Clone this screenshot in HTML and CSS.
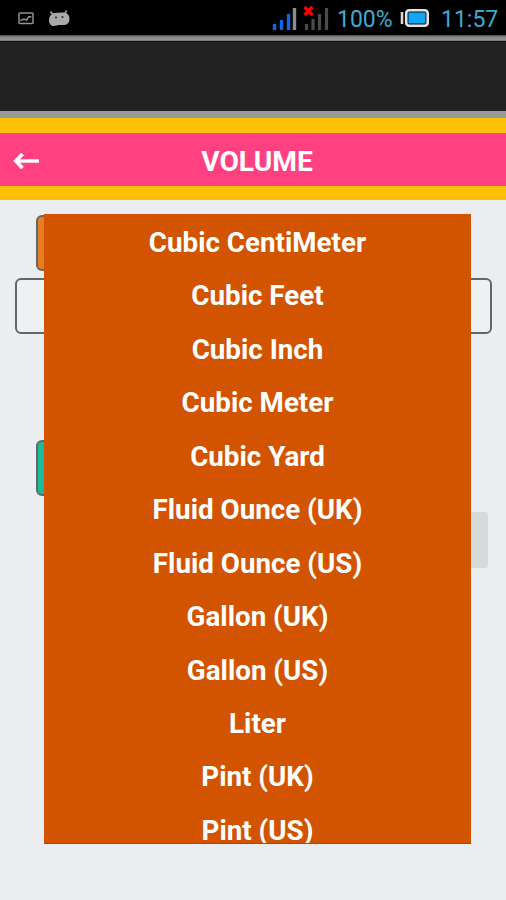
FILE: index.html
```html
<!DOCTYPE html>
<html lang="en">
<head>
<meta charset="utf-8">
<title>Volume</title>
<link rel="stylesheet" href="styles.css">
</head>
<body>
<header class="status">
  <svg class="notices" width="76" height="35" viewBox="0 0 76 35">
    <rect x="19" y="13" width="14" height="10.500" rx="1" fill="none" stroke="#929292" stroke-width="1.5"/>
    <path d="M20.500 20.500l3.500-1.500 2.500 1 2.500-3.500 2.500.5" fill="none" stroke="#929292" stroke-width="1.500"/>
    <path d="M50.500 11.500l3 4M66.500 10.500l-2 4" stroke="#aaa" stroke-width="1.600"/>
    <path d="M49 20.500c0-4 2-7 6-7.500 3-.4 5-.3 8-.5 4-.2 6.500 2.500 6.500 6.500S67 25 63 25h-4c-2 0-3 1-5 1-3 0-5-2-5-5.500z" fill="#aaa"/>
    <circle cx="56" cy="17.500" r="1" fill="#222"/><circle cx="62.500" cy="17" r="1" fill="#222"/>
  </svg>
  <svg class="signals" width="60" height="35" viewBox="0 0 60 35">
    <path d="M4.500 24v6M11.500 20v10M18.500 14v16" stroke="#1264e8" stroke-width="3.400"/>
    <path d="M24.500 8v22" stroke="#8d8d8d" stroke-width="3.400"/>
    <path d="M36.500 24v6M43 19v11M49.500 14v16M56.500 8v22" stroke="#4b4b4b" stroke-width="3.200"/>
    <path d="M34.500 7l8 8M42.500 7l-8 8" stroke="#f00" stroke-width="3.400"/>
  </svg>
  <span class="percent">100%</span>
  <svg class="battery" width="30" height="35" viewBox="0 0 30 35">
    <path d="M2 12v12" stroke="#ddd8cf" stroke-width="2.600"/>
    <rect x="6.200" y="10.200" width="21.500" height="15.500" rx="3" fill="#001018" stroke="#e8e3dc" stroke-width="2.600"/>
    <rect x="8.500" y="12.500" width="17" height="11" fill="#14a5f5"/>
  </svg>
  <span class="time">11:57</span>
</header>
<div class="divider"></div>
<div class="actionbar"></div>
<nav class="titlebar">
  <svg class="back" width="28" height="20" viewBox="0 0 28 20">
    <path d="M27 10H5" stroke="#fff" stroke-width="3.400"/>
    <path d="M10.500 3L3.800 10l6.700 7" fill="none" stroke="#fff" stroke-width="3.600"/>
  </svg>
  <h1>VOLUME</h1>
</nav>
<main class="screen">
  <div class="form">
    <div class="field from"></div>
    <div class="field value"></div>
    <div class="field to"></div>
    <div class="field result"></div>
  </div>
  <ul class="dropdown">
    <li>Cubic CentiMeter</li>
    <li>Cubic Feet</li>
    <li>Cubic Inch</li>
    <li>Cubic Meter</li>
    <li>Cubic Yard</li>
    <li>Fluid Ounce (UK)</li>
    <li>Fluid Ounce (US)</li>
    <li>Gallon (UK)</li>
    <li>Gallon (US)</li>
    <li>Liter</li>
    <li>Pint (UK)</li>
    <li>Pint (US)</li>
  </ul>
</main>
</body>
</html>
```
FILE: styles.css
```css
* { box-sizing: border-box; }
body {
  margin: 0;
  height: 900px;
  overflow: hidden;
  display: flex;
  flex-direction: column;
  background: #ebeef0;
  font-family: Roboto, sans-serif;
}
.status {
  height: 35px;
  flex: none;
  display: flex;
  align-items: center;
  background: #000;
  color: #41a9d3;
  font-size: 23px;
  line-height: 35px;
  white-space: nowrap;
}
.status svg { flex: none; }
.notices { margin-right: 194px; }
.signals { margin-right: 7px; }
.percent, .time { padding-top: 3px; }
.percent { width: 56px; }
.battery { margin-left: 7px; }
.time { margin-left: 11px; }
.divider {
  height: 7px;
  flex: none;
  background: linear-gradient(#3c3c3c, #858585 25%, #959595 75%, #111 92%);
}
.actionbar {
  height: 76px;
  flex: none;
  background: #222;
  border-bottom: 7px solid #999;
}
.titlebar {
  height: 82px;
  flex: none;
  display: grid;
  grid-template-columns: 28px 1fr 28px;
  align-items: center;
  padding: 0 4px 0 12px;
  background: #ff4081;
  border-top: 15px solid #ffc107;
  border-bottom: 14px solid #ffc107;
}
.titlebar h1 {
  margin: 4px 0 0;
  color: #fff;
  font-size: 28.2px;
  font-weight: 700;
  line-height: 32px;
  text-align: center;
}
.back { margin-top: 3px; }
.screen {
  position: relative;
  flex: 1;
}
.form {
  display: flex;
  flex-direction: column;
  padding: 15px 14px 0 15px;
}
.field {
  height: 56px;
  border: 2px solid #62676a;
  border-radius: 6px;
}
.from { margin: 0 21px; background: #e67e22; }
.value { margin-top: 7px; background: #eef1f2; }
.to { margin: 106px 21px 0; background: #1abc9c; }
.result {
  margin: 16px 4px 0 250px;
  background: #d6dbda;
  border: 0;
  border-radius: 3px;
}
.dropdown {
  position: absolute;
  left: 44px;
  top: 14px;
  width: 427px;
  height: 630px;
  margin: 0;
  padding: 2px 0 0;
  overflow: hidden;
  list-style: none;
  background: #d35400;
  border-bottom: 1px solid #cf3900;
  color: #fff;
  font-size: 27.75px;
  font-weight: 700;
  text-align: center;
}
.dropdown li {
  height: 53.45px;
  line-height: 53.45px;
}
```
